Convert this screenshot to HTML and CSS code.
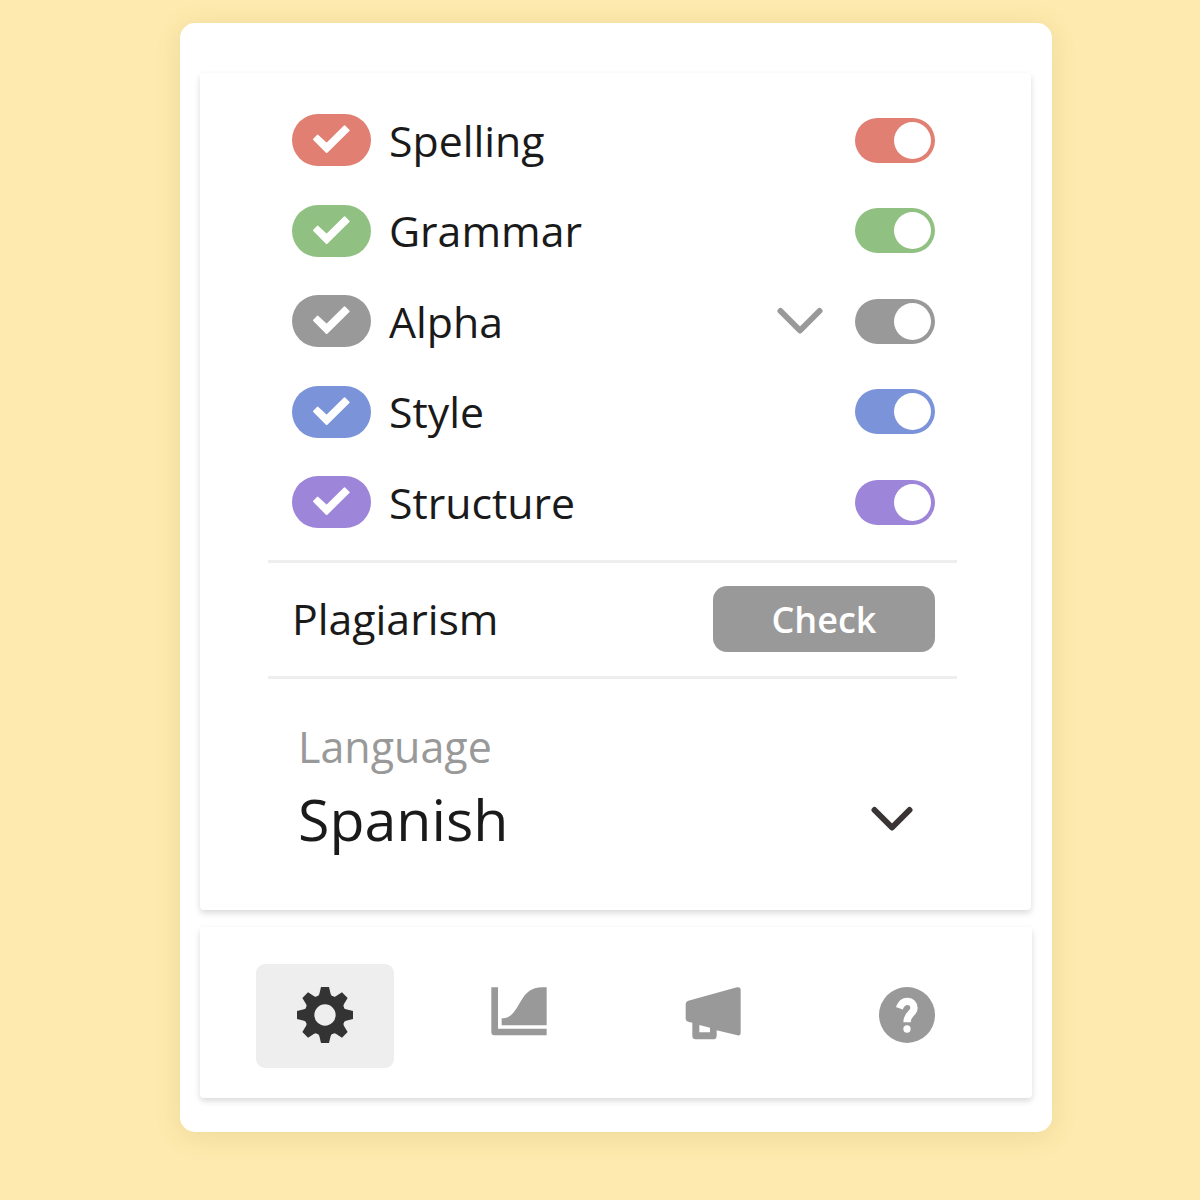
FILE: index.html
```html
<!doctype html>
<html lang="en">
<head>
    <meta charset="UTF-8">
    <meta name="viewport" content="width=device-width, initial-scale=1.0">
    <title>Settings</title>
    <link rel="stylesheet" href="styles.css">
</head>
<body>

<div class="card">
    <div class="panel settings">
        <div class="row spelling">
            <svg class="pill" viewBox="0 0 237 156"><path d="M66 76L77 65L104 90L158 37L170 49L104 114Z"/></svg>
            <span class="label">Spelling</span>
            <span class="toggle"></span>
        </div>
        <div class="row grammar">
            <svg class="pill" viewBox="0 0 237 156"><path d="M66 76L77 65L104 90L158 37L170 49L104 114Z"/></svg>
            <span class="label">Grammar</span>
            <span class="toggle"></span>
        </div>
        <div class="row alpha">
            <svg class="pill" viewBox="0 0 237 156"><path d="M66 76L77 65L104 90L158 37L170 49L104 114Z"/></svg>
            <span class="label">Alpha</span>
            <svg class="expand" viewBox="0 0 46 28"><path d="M3.5 4L23 23.5L42.5 4"/></svg>
            <span class="toggle"></span>
        </div>
        <div class="row style">
            <svg class="pill" viewBox="0 0 237 156"><path d="M66 76L77 65L104 90L158 37L170 49L104 114Z"/></svg>
            <span class="label">Style</span>
            <span class="toggle"></span>
        </div>
        <div class="row structure">
            <svg class="pill" viewBox="0 0 237 156"><path d="M66 76L77 65L104 90L158 37L170 49L104 114Z"/></svg>
            <span class="label">Structure</span>
            <span class="toggle"></span>
        </div>

        <div class="plagiarism">
            <span>Plagiarism</span>
            <button type="button">Check</button>
        </div>

        <div class="language">
            <div>
                <div class="language-label">Language</div>
                <div class="language-value">Spanish</div>
            </div>
            <svg class="arrow" viewBox="0 0 42 26"><path d="M3.5 4L21 21.500L38.500 4"/></svg>
        </div>
    </div>

    <div class="panel tabs">
        <a class="tab active">
            <svg viewBox="-84 -84 168 168">
                <defs>
                    <path id="tooth" d="M-25 -48V-56Q-19 -56 -17 -63L-12 -84H12L17 -63Q19 -56 25 -56V-48Z"/>
                </defs>
                <circle r="45.500" fill="none" stroke="#333" stroke-width="27"/>
                <use href="#tooth"/>
                <use href="#tooth" transform="rotate(45)"/>
                <use href="#tooth" transform="rotate(90)"/>
                <use href="#tooth" transform="rotate(135)"/>
                <use href="#tooth" transform="rotate(180)"/>
                <use href="#tooth" transform="rotate(225)"/>
                <use href="#tooth" transform="rotate(270)"/>
                <use href="#tooth" transform="rotate(315)"/>
            </svg>
        </a>
        <a class="tab">
            <svg viewBox="63 50 168 168">
                <path d="M64 51H84V175H230V195H73Q64 195 64 186Z"/>
                <path d="M95 144C155 144 140 51 217 51H230V165H95Z"/>
            </svg>
        </a>
        <a class="tab">
            <svg viewBox="45 50 168 168">
                <path fill-rule="evenodd" d="M55 91L201 51Q212 49 212 59V187Q212 197 202 195L140 180V196Q140 207 129 207H77Q67 207 67 197V157L54 154Q47 151 47 145V101Q47 94 55 91ZM88 164V186H120V172Z"/>
            </svg>
        </a>
        <a class="tab">
            <svg viewBox="58 49 168 168">
                <circle cx="142" cy="133" r="84"/>
                <path class="mark" d="M119 113C124 99 132 92 143 92C155 92 163 101 163 112C163 129 142 128 142 155"/>
                <circle class="dot" cx="142" cy="175" r="11"/>
            </svg>
        </a>
    </div>
</div>

</body>
</html>
```

FILE: styles.css
```css
* {
    box-sizing: border-box;
}

body {
    font-family: "Open Sans", sans-serif;
    background-color: #feeaae;
    color: #1a1a1a;
    margin: 0;
    padding: 23px 148px 68px 180px;
}

.card {
    height: 1109px;
    padding: 50px 20px 0;
    background-color: #fff;
    border-radius: 15px;
    box-shadow: 0 4px 26px rgba(120, 100, 30, 0.13);
}

.panel {
    background-color: #fff;
    border-radius: 4px;
    box-shadow: 0 3px 6px rgba(0, 0, 0, 0.15);
}

.settings {
    width: 831px;
    height: 837px;
    padding: 22px 74px 0 68px;
    margin-bottom: 17px;
}

.row {
    display: flex;
    align-items: center;
    height: 90.5px;
    padding: 0 22px 0 23.5px;
    font-size: 42.8px;
}

.pill {
    width: 79px;
    height: 52px;
    border-radius: 26px;
    background-color: var(--color);
}

.pill path {
    fill: #fff;
    stroke: #fff;
    stroke-width: 6;
    stroke-linejoin: round;
}

.label {
    flex: 1;
    margin-left: 18.5px;
}

.toggle {
    display: flex;
    justify-content: flex-end;
    width: 80px;
    height: 45px;
    padding: 4px;
    border-radius: 23px;
    background-color: var(--color);
}

.toggle::after {
    content: "";
    width: 37px;
    height: 37px;
    border-radius: 50%;
    background-color: #fff;
}

.spelling { --color: #e07f72; }
.grammar { --color: #91c182; }
.alpha { --color: #999; }
.style { --color: #7b93d9; }
.structure { --color: #9d85d9; }

.expand,
.arrow {
    fill: none;
    stroke-linecap: round;
    stroke-linejoin: round;
}

.expand {
    width: 46px;
    height: 28px;
    margin-right: 32px;
    stroke: #999;
    stroke-width: 6;
}

.plagiarism {
    display: flex;
    align-items: center;
    justify-content: space-between;
    height: 119px;
    margin-top: 12px;
    padding: 0 22px 0 24px;
    border-top: 3px solid #eee;
    border-bottom: 3px solid #eee;
    font-size: 42.8px;
}

.plagiarism span {
    padding-bottom: 2px;
}

.plagiarism button {
    width: 222px;
    height: 66px;
    border: none;
    border-radius: 14px;
    background-color: #999;
    color: #fff;
    font-family: inherit;
    font-size: 36px;
    font-weight: 600;
}

.language {
    display: flex;
    justify-content: space-between;
    padding: 38px 44px 0 30px;
}

.language-label {
    color: #999;
    font-size: 43px;
    line-height: 60px;
}

.language-value {
    font-size: 57.3px;
    line-height: 84px;
}

.arrow {
    width: 42px;
    height: 26px;
    margin-top: 89px;
    stroke: #3a3435;
    stroke-width: 6;
}

.tabs {
    display: flex;
    gap: 56px;
    height: 171px;
    padding: 37px 56px 0;
}

.tab {
    display: flex;
    justify-content: center;
    width: 138px;
    height: 104px;
    padding-top: 23px;
    border-radius: 9px;
}

.tab svg {
    width: 56px;
    height: 56px;
    fill: #999;
}

.tab.active {
    background-color: #eee;
}

.tab.active svg {
    fill: #333;
}

.tab .mark {
    fill: none;
    stroke: #fff;
    stroke-width: 22;
}

.tab .dot {
    fill: #fff;
}
```
